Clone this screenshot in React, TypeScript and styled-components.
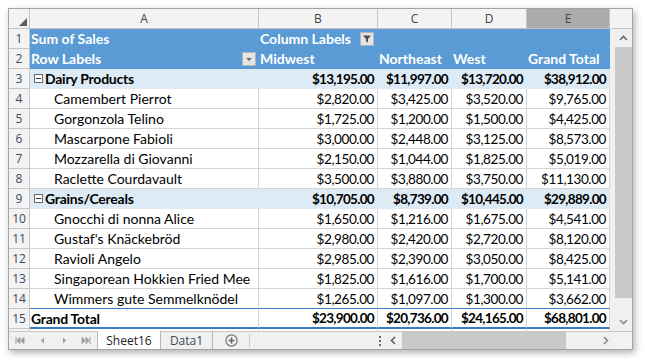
import React from "react"
import styled, { createGlobalStyle, css } from "styled-components"

const GlobalStyle = createGlobalStyle`
  html, body {
    margin: 0;
    background: #ffffff;
  }
  body {
    font-family: Lato, "Liberation Sans", sans-serif;
  }
`

const headerBlue = "#5b9bd5"
const subtotalBlue = "#ddebf7"
const lineBlue = "#3b7dc4"
const gridLine = "#d4d4d4"
const headLine = "#c6c6c6"

type Tone = "head" | "sub" | "plain" | "total"

type Row = {
  tone: Tone
  cells: string[]
}

const columns = ["A", "B", "C", "D", "E"]
const colWidths = [21, 229, 119, 74, 75, 83]

const rows: Row[] = [
  { tone: "head", cells: ["Sum of Sales", "Column Labels", "", "", ""] },
  { tone: "head", cells: ["Row Labels", "Midwest", "Northeast", "West", "Grand Total"] },
  { tone: "sub", cells: ["Dairy Products", "$13,195.00", "$11,997.00", "$13,720.00", "$38,912.00"] },
  { tone: "plain", cells: ["Camembert Pierrot", "$2,820.00", "$3,425.00", "$3,520.00", "$9,765.00"] },
  { tone: "plain", cells: ["Gorgonzola Telino", "$1,725.00", "$1,200.00", "$1,500.00", "$4,425.00"] },
  { tone: "plain", cells: ["Mascarpone Fabioli", "$3,000.00", "$2,448.00", "$3,125.00", "$8,573.00"] },
  { tone: "plain", cells: ["Mozzarella di Giovanni", "$2,150.00", "$1,044.00", "$1,825.00", "$5,019.00"] },
  { tone: "plain", cells: ["Raclette Courdavault", "$3,500.00", "$3,880.00", "$3,750.00", "$11,130.00"] },
  { tone: "sub", cells: ["Grains/Cereals", "$10,705.00", "$8,739.00", "$10,445.00", "$29,889.00"] },
  { tone: "plain", cells: ["Gnocchi di nonna Alice", "$1,650.00", "$1,216.00", "$1,675.00", "$4,541.00"] },
  { tone: "plain", cells: ["Gustaf's Knäckebröd", "$2,980.00", "$2,420.00", "$2,720.00", "$8,120.00"] },
  { tone: "plain", cells: ["Ravioli Angelo", "$2,985.00", "$2,390.00", "$3,050.00", "$8,425.00"] },
  { tone: "plain", cells: ["Singaporean Hokkien Fried Mee", "$1,825.00", "$1,616.00", "$1,700.00", "$5,141.00"] },
  { tone: "plain", cells: ["Wimmers gute Semmelknödel", "$1,265.00", "$1,097.00", "$1,300.00", "$3,662.00"] },
  { tone: "total", cells: ["Grand Total", "$23,900.00", "$20,736.00", "$24,165.00", "$68,801.00"] },
]

export default function App() {
  return (
    <Page>
      <GlobalStyle />
      <Window>
        <Body>
          <Sheet>
            <Corner>
              <CornerMark />
            </Corner>
            {columns.map((c) => (
              <ColHead key={c} $selected={c === "E"}>
                {c}
              </ColHead>
            ))}
            {rows.map((row, r) => (
              <React.Fragment key={r}>
                <RowHead>{r + 1}</RowHead>
                {row.cells.map((text, c) => (
                  <Cell
                    key={c}
                    $tone={row.tone}
                    $nextTotal={r === 13}
                    $num={c > 0 && row.tone !== "head"}
                    $indent={c === 0 && row.tone === "plain"}
                  >
                    {c === 0 && row.tone === "sub" && <Collapse />}
                    <span>{text}</span>
                    {r === 0 && c === 1 && (
                      <PivotButton $at={3}>
                        <svg width="10" height="10" viewBox="0 0 10 10">
                          <path d="M1 1.5h8L6 5v3.5L4 7.5V5z" fill="#505050" />
                        </svg>
                      </PivotButton>
                    )}
                    {r === 1 && c === 0 && (
                      <PivotButton $at={2}>
                        <svg width="8" height="5" viewBox="0 0 8 5">
                          <path d="M1 1h6L4 4z" fill="#6a6a6a" />
                        </svg>
                      </PivotButton>
                    )}
                  </Cell>
                ))}
              </React.Fragment>
            ))}
            {/* row 16 only peeks in by two pixels */}
            <RowHead />
            {columns.map((c) => (
              <Cell key={c} $tone="plain" />
            ))}
          </Sheet>
          <VScroll>
            <VTop />
            <VLane>
              <Arrow>
                <svg width="9" height="6" viewBox="0 0 9 6">
                  <path d="M1 5l3.5-3.5L8 5" stroke="#6b6b6b" strokeWidth="1.6" fill="none" />
                </svg>
              </Arrow>
              <VThumb />
              <VTrack />
              <Arrow>
                <svg width="9" height="6" viewBox="0 0 9 6">
                  <path d="M1 1l3.5 3.5L8 1" stroke="#8a8a8a" strokeWidth="1.6" fill="none" />
                </svg>
              </Arrow>
            </VLane>
          </VScroll>
        </Body>
        <TabBar>
          <NavGroup>
            <NavButton>
              <svg width="10" height="7" viewBox="0 0 10 7">
                <path d="M1 0v7M5 0.5L1.8 3.5 5 6.5zM9 0.5L5.8 3.5 9 6.5z" stroke="#a0a0a0" strokeWidth="1" fill="#a0a0a0" />
              </svg>
            </NavButton>
            <NavButton>
              <svg width="5" height="7" viewBox="0 0 5 7">
                <path d="M4 0.5L0.8 3.5 4 6.5z" fill="#a0a0a0" />
              </svg>
            </NavButton>
            <NavButton>
              <svg width="5" height="7" viewBox="0 0 5 7">
                <path d="M1 0.5L4.2 3.5 1 6.5z" fill="#a0a0a0" />
              </svg>
            </NavButton>
            <NavButton>
              <svg width="10" height="7" viewBox="0 0 10 7">
                <path d="M9 0v7M1 0.5L4.2 3.5 1 6.5zM5 0.5L8.2 3.5 5 6.5z" stroke="#a0a0a0" strokeWidth="1" fill="#a0a0a0" />
              </svg>
            </NavButton>
          </NavGroup>
          <SheetTab $active>Sheet16</SheetTab>
          <SheetTab>Data1</SheetTab>
          <AddSheet>
            <svg width="13" height="13" viewBox="0 0 13 13">
              <circle cx="6.5" cy="6.5" r="5.6" stroke="#777" strokeWidth="1.2" fill="none" />
              <path d="M6.5 3.5v6M3.5 6.5h6" stroke="#666" strokeWidth="1.6" />
            </svg>
          </AddSheet>
          <TabSpacer />
          <Splitter>
            <i />
            <i />
            <i />
          </Splitter>
          <HScroll>
            <HArrow>
              <svg width="6" height="9" viewBox="0 0 6 9">
                <path d="M5 1L1.5 4.5 5 8" stroke="#5f5f5f" strokeWidth="1.6" fill="none" />
              </svg>
            </HArrow>
            <HThumb />
            <HTrack />
            <HArrow>
              <svg width="6" height="9" viewBox="0 0 6 9">
                <path d="M1 1l3.5 3.5L1 8" stroke="#8a8a8a" strokeWidth="1.6" fill="none" />
              </svg>
            </HArrow>
          </HScroll>
          <ScrollCorner />
        </TabBar>
      </Window>
    </Page>
  )
}

const Page = styled.div`
  padding: 8px;
`

const Window = styled.div`
  width: 625px;
  height: 342px;
  box-sizing: border-box;
  border: 1px solid #a3a3a3;
  box-shadow: 2px 3px 7px rgba(0, 0, 0, 0.3);
  display: flex;
  flex-direction: column;
  overflow: hidden;
  background: #ffffff;
`

const Body = styled.div`
  display: flex;
  height: 322px;
  overflow: hidden;
`

const Sheet = styled.div`
  display: grid;
  grid-template-columns: ${colWidths.map((w) => `${w}px`).join(" ")};
  grid-auto-rows: 20px;
  align-content: start;
  font-size: 14px;
  color: #000;
`

const Corner = styled.div`
  position: relative;
  box-sizing: border-box;
  background: #f3f3f3;
  border-right: 1px solid ${headLine};
  border-bottom: 1px solid ${headLine};
`

const CornerMark = styled.div`
  position: absolute;
  right: 2px;
  bottom: 2px;
  width: 0;
  height: 0;
  border-left: 8px solid transparent;
  border-bottom: 8px solid #5e5e5e;
`

const ColHead = styled.div<{ $selected?: boolean }>`
  box-sizing: border-box;
  display: flex;
  align-items: center;
  justify-content: center;
  font-family: "Open Sans", sans-serif;
  font-size: 12px;
  color: #444;
  background: ${({ $selected }) => ($selected ? "#ababab" : "#f3f3f3")};
  border-right: 1px solid ${headLine};
  border-bottom: 1px solid ${headLine};
`

const RowHead = styled.div`
  box-sizing: border-box;
  display: flex;
  align-items: center;
  justify-content: center;
  font-family: "Open Sans", sans-serif;
  font-size: 12px;
  color: #3e4a5a;
  background: #f3f3f3;
  border-right: 1px solid ${headLine};
  border-bottom: 1px solid ${headLine};
`

const toneStyles: Record<Tone, ReturnType<typeof css>> = {
  head: css`
    background: ${headerBlue};
    color: #fff;
    font-weight: 700;
    border-right-color: ${headerBlue};
    border-bottom-color: ${headerBlue};
  `,
  sub: css`
    background: ${subtotalBlue};
    font-weight: 700;
    letter-spacing: -0.25px;
    border-right-color: ${subtotalBlue};
    border-bottom-color: ${subtotalBlue};
  `,
  plain: css``,
  total: css`
    font-weight: 700;
    letter-spacing: -0.25px;
    border-bottom: 2px solid ${lineBlue};
  `,
}

const Cell = styled.div<{ $tone: Tone; $num?: boolean; $indent?: boolean; $nextTotal?: boolean }>`
  position: relative;
  box-sizing: border-box;
  display: flex;
  align-items: center;
  justify-content: ${({ $num }) => ($num ? "flex-end" : "flex-start")};
  gap: 2px;
  padding: 0 3px 0 ${({ $indent }) => ($indent ? 24 : 1)}px;
  white-space: nowrap;
  overflow: hidden;
  background: #fff;
  border-right: 1px solid ${gridLine};
  border-bottom: 1px solid ${({ $nextTotal }) => ($nextTotal ? lineBlue : gridLine)};
  ${({ $tone }) => toneStyles[$tone]}
  ${({ $num, $tone }) =>
    $num &&
    css`
      font-size: 13.5px;
      letter-spacing: ${$tone === "plain" ? -0.4 : -0.7}px;
    `}
`

const Collapse = styled.span`
  position: relative;
  box-sizing: border-box;
  width: 9px;
  height: 9px;
  margin-left: 3px;
  border: 1px solid #6a6a6a;
  background: #fff;
  flex: none;

  &::after {
    content: "";
    position: absolute;
    left: 1px;
    right: 1px;
    top: 3px;
    height: 1px;
    background: #333;
  }
`

const PivotButton = styled.span<{ $at: number }>`
  position: absolute;
  right: ${({ $at }) => $at}px;
  top: 3px;
  width: 14px;
  height: 14px;
  box-sizing: border-box;
  display: flex;
  align-items: center;
  justify-content: center;
  background: #e4e4e4;
  border: 1px solid #b4b4b4;
`

const VScroll = styled.div`
  width: 22px;
  display: flex;
  flex-direction: column;
  background: #f0f0f0;
`

const VTop = styled.div`
  height: 20px;
  box-sizing: border-box;
  border-bottom: 1px solid ${headLine};
  background: #f3f3f3;
`

const VLane = styled.div`
  flex: 1;
  display: flex;
  flex-direction: column;
  margin-left: 5px;
`

const Arrow = styled.div`
  height: 18px;
  display: flex;
  align-items: center;
  justify-content: center;
`

const VThumb = styled.div`
  height: 251px;
  background: #c9c9c9;
`

const VTrack = styled.div`
  flex: 1;
`

const TabBar = styled.div`
  flex: 1;
  display: flex;
  align-items: stretch;
  background: #f0f0f0;
  border-top: 1px solid #c8c8c8;
  font-family: "Open Sans", sans-serif;
  font-size: 12px;
`

const NavGroup = styled.div`
  display: flex;
  border-right: 1px solid #b8b8b8;
`

const NavButton = styled.div`
  width: 22px;
  display: flex;
  align-items: center;
  justify-content: center;
`

const SheetTab = styled.div<{ $active?: boolean }>`
  display: flex;
  align-items: center;
  justify-content: center;
  width: ${({ $active }) => ($active ? 62 : 51)}px;
  margin-top: -1px;
  border-right: 1px solid #b8b8b8;
  color: ${({ $active }) => ($active ? "#222" : "#3a4a60")};
  background: ${({ $active }) => ($active ? "#ffffff" : "transparent")};
`

const AddSheet = styled.div`
  width: 36px;
  display: flex;
  align-items: center;
  justify-content: center;
  border-right: 1px solid #c8c8c8;
  margin: 2px 0;
`

const TabSpacer = styled.div`
  width: 126px;
`

const Splitter = styled.div`
  width: 7px;
  display: flex;
  flex-direction: column;
  align-items: center;
  justify-content: center;
  gap: 2px;

  i {
    width: 2px;
    height: 2px;
    background: #666;
  }
`

const HScroll = styled.div`
  flex: 1;
  display: flex;
`

const HArrow = styled.div`
  width: 19px;
  display: flex;
  align-items: center;
  justify-content: center;
`

const HThumb = styled.div`
  width: 164px;
  background: #c9c9c9;
`

const HTrack = styled.div`
  flex: 1;
`

const ScrollCorner = styled.div`
  width: 17px;
  background: #f3f3f3;
`
